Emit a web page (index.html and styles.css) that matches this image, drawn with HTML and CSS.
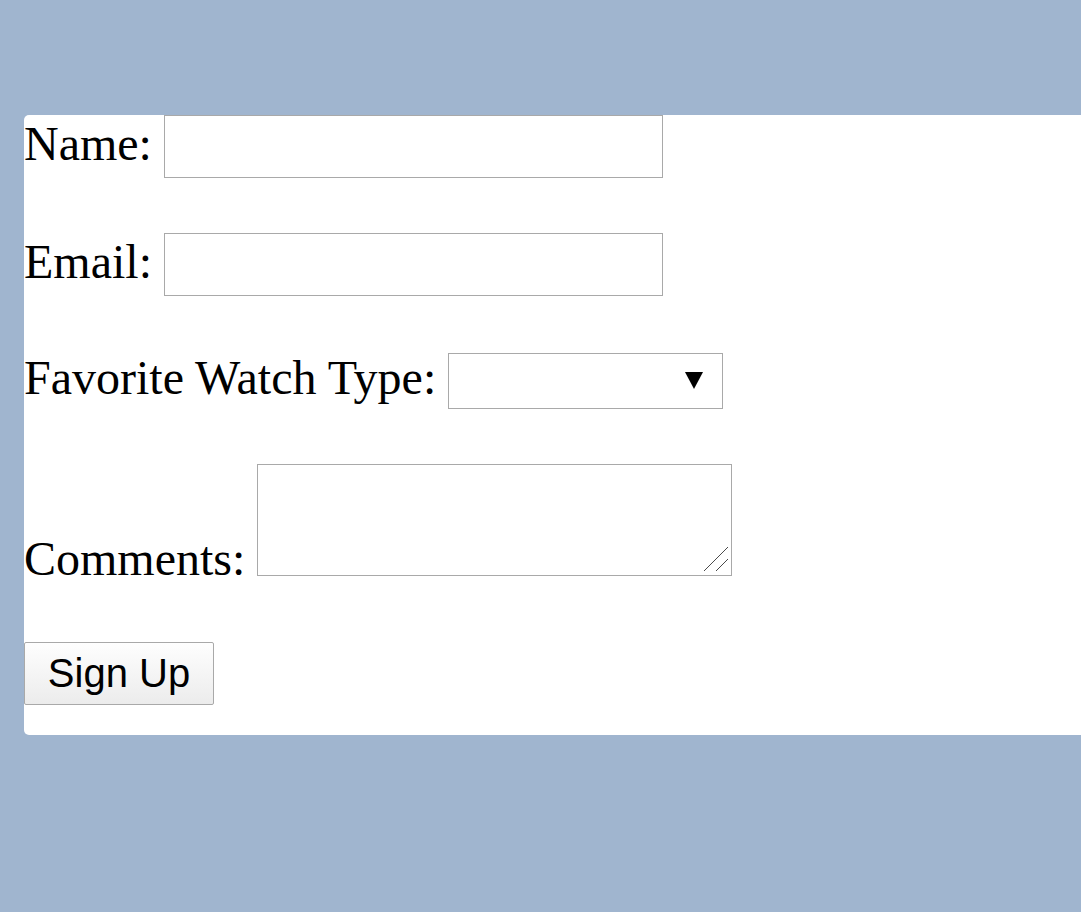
FILE: index.html
```html
<!DOCTYPE html>
<html>
<head>
<meta charset="utf-8">
<title>Sign Up</title>
<link rel="stylesheet" href="styles.css">
</head>
<body>
<form class="panel">
  <div class="row">
    <label class="lbl" for="name">Name:</label>
    <input class="field" id="name" type="text">
  </div>
  <div class="row">
    <label class="lbl" for="email">Email:</label>
    <input class="field" id="email" type="email">
  </div>
  <div class="row">
    <label class="lbl" for="watch">Favorite Watch Type:</label>
    <span class="select-wrap">
      <select class="select" id="watch">
        <option></option>
      </select>
      <svg class="arrow" width="18" height="17" viewBox="0 0 18 17"><polygon points="0,0 18,0 9,17" fill="#000"/></svg>
    </span>
  </div>
  <div class="row row-bottom">
    <label class="lbl lbl-bottom" for="comments">Comments:</label>
    <span class="area-wrap">
      <textarea class="area" id="comments"></textarea>
      <svg class="grip" width="26" height="26" viewBox="0 0 26 26"><line x1="1" y1="25" x2="25" y2="1" stroke="#4a4a4a" stroke-width="1"/><line x1="13" y1="25" x2="25" y2="13" stroke="#4a4a4a" stroke-width="1"/></svg>
    </span>
  </div>
  <div class="row-btn">
    <button class="btn" type="button">Sign Up</button>
  </div>
</form>
</body>
</html>
```
FILE: styles.css
```css
html, body {
  margin: 0;
  padding: 0;
}
body {
  background: #a0b5cf;
  font-family: "Liberation Serif", "Times New Roman", serif;
  height: 912px;
  overflow: hidden;
}
.panel {
  margin: 115px 0 0 24px;
  background: #fff;
  border-radius: 5px 0 0 5px;
  padding: 0 0 30px 0;
  display: flex;
  flex-direction: column;
}
.row {
  display: flex;
  align-items: center;
  gap: 12px;
  margin-bottom: 55px;
}
.row:nth-child(2) {
  margin-bottom: 57px;
}
.row-bottom {
  align-items: flex-end;
  margin-bottom: 66px;
}
.lbl {
  font-size: 48px;
  line-height: 48px;
  padding-bottom: 6px;
  color: #000;
  white-space: nowrap;
}
.lbl-bottom {
  padding-bottom: 0;
  margin-bottom: -7px;
}
.field {
  box-sizing: border-box;
  width: 499px;
  height: 63px;
  border: 1px solid #a9a9a9;
  border-radius: 0;
  margin: 0;
  padding: 2px 6px;
  font-size: 40px;
  font-family: "Liberation Serif", serif;
  background: #fff;
}
.select-wrap {
  position: relative;
  display: inline-block;
  width: 275px;
  height: 56px;
}
.select {
  -webkit-appearance: none;
  appearance: none;
  box-sizing: border-box;
  width: 275px;
  height: 56px;
  border: 1px solid #a9a9a9;
  border-radius: 0;
  background: #fff;
  margin: 0;
  font-size: 36px;
  font-family: "Liberation Sans", Arial, sans-serif;
}
.arrow {
  position: absolute;
  left: 237px;
  top: 19px;
  pointer-events: none;
}
.area-wrap {
  position: relative;
  display: block;
  width: 475px;
  height: 112px;
}
.area {
  display: block;
  box-sizing: border-box;
  width: 475px;
  height: 112px;
  border: 1px solid #a9a9a9;
  border-radius: 0;
  margin: 0;
  padding: 2px;
  font-size: 16px;
  background: #fff;
  resize: none;
}
.grip {
  position: absolute;
  left: 446px;
  top: 82px;
  pointer-events: none;
}
.row-btn {
  display: flex;
}
.btn {
  box-sizing: border-box;
  width: 190px;
  height: 63px;
  margin: 0;
  padding: 0;
  border: 1px solid #a9a9a9;
  border-radius: 2px;
  background: linear-gradient(#fefefe, #ececec);
  font-family: "Liberation Sans", Arial, sans-serif;
  font-size: 40px;
  color: #000;
}
```
